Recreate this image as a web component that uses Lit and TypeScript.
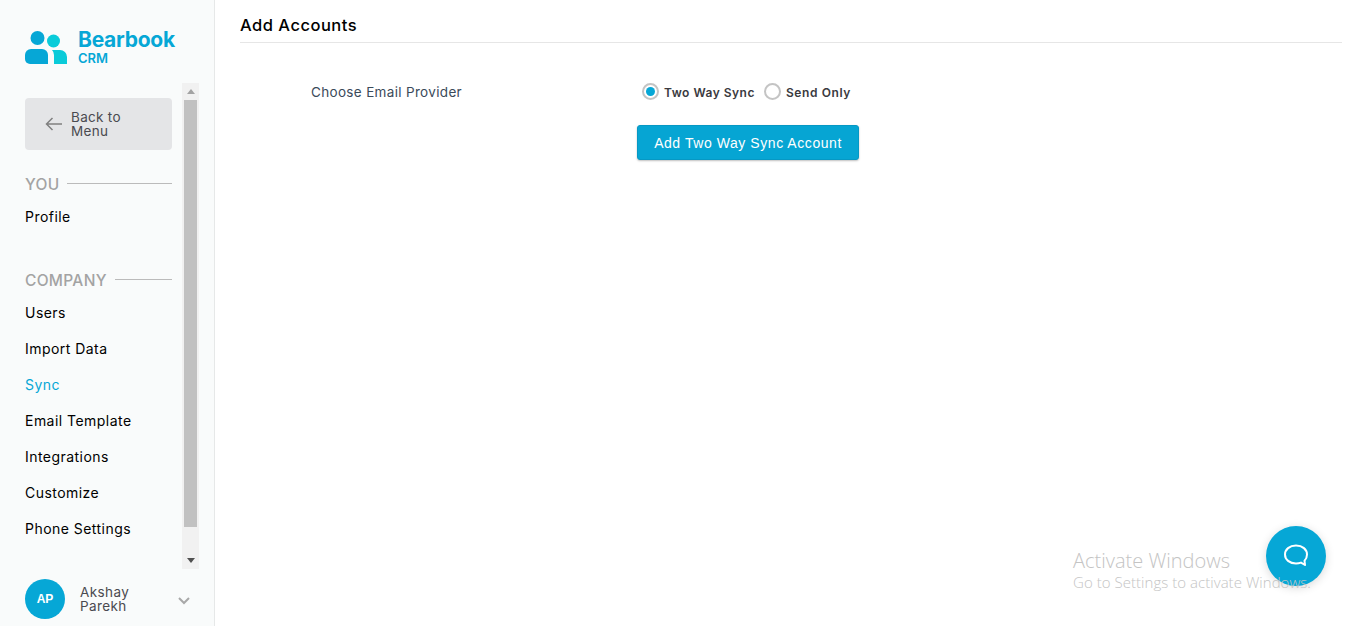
import { LitElement, html, css } from "lit";
import { customElement } from "lit/decorators.js";

@customElement("app-root")
export class AppRoot extends LitElement {
  static styles = css`
    :host { display: block; height: 626px; width: 1365px; overflow: hidden; position: relative; background: #fff; font-family: Inter, "Noto Sans", sans-serif; color: #000; }
    .page { display: flex; height: 626px; }
    .side { width: 214px; flex: none; background: #f9fbfb; border-right: 1px solid #e6e8e8; display: flex; flex-direction: column; box-sizing: content-box; }
    .logo { height: 83px; flex: none; padding: 29px 0 0 25px; box-sizing: border-box; display: flex; gap: 11px; }
    .logo svg { margin-top: 2px; }
    .brand { color: #06a7d6; font-weight: 700; font-size: 21px; line-height: 22px; letter-spacing: -0.25px; }
    .crm { color: #06a7d6; font-weight: 600; font-size: 13px; line-height: 15px; }
    .mid { height: 486px; flex: none; display: flex; padding-left: 25px; overflow: hidden; }
    .nav { width: 147px; flex: none; padding-top: 15px; }
    .back { height: 52px; background: #e4e5e7; border-radius: 4px; display: flex; align-items: center; padding-left: 20px; gap: 9px; color: #4a4a50; font-size: 13.5px; line-height: 14px; letter-spacing: 0.3px; box-sizing: border-box; }
    .head { display: flex; align-items: center; gap: 8px; color: #a3a3a3; font-size: 15.5px; font-weight: 500; line-height: 20px; letter-spacing: 0.3px; }
    .head::after { content: ""; flex: 1; height: 1px; background: #bbb; margin-top: -4px; }
    .you { margin-top: 25px; }
    .company { margin-top: 37px; }
    .item { height: 36px; display: flex; align-items: center; font-size: 14px; letter-spacing: 0.46px; color: #000; white-space: nowrap; }
    .items { margin-top: 3px; }
    .active { color: #06a7d6; }
    .sb { width: 17px; margin-left: 10px; flex: none; background: #f1f1f1; display: flex; flex-direction: column; align-items: center; box-sizing: border-box; }
    .sb .up, .sb .down { height: 17px; display: flex; align-items: center; justify-content: center; flex: none; }
    .thumb { width: 13px; height: 427px; background: #c1c1c1; flex: none; }
    .spacer { flex: 1; }
    .user { flex: 1; display: flex; align-items: flex-start; padding: 10px 0 0 25px; }
    .avatar { width: 40px; height: 40px; border-radius: 50%; background: #06a7d6; color: #fff; font: 700 12px/40px "Liberation Sans", Arial, sans-serif; text-align: center; flex: none; }
    .name { margin-left: 15px; width: 98px; color: #4a4a50; font-size: 13.5px; line-height: 14px; letter-spacing: 0.4px; padding-top: 6px; }
    .chev { margin-top: 18px; }
    .main { flex: 1; padding: 0 23px 0 25px; min-width: 0; }
    .title { height: 43px; box-sizing: border-box; border-bottom: 1px solid #e6e6e6; font-size: 16.5px; font-weight: 500; letter-spacing: 0.5px; color: #000; line-height: 51px; overflow: hidden; }
    .row { display: flex; margin-top: 38px; height: 22px; align-items: center; }
    .lbl { width: 331px; padding-left: 71px; box-sizing: content-box; font-size: 13.5px; letter-spacing: 0.33px; color: #3b4a5a; flex: none; line-height: 20px; padding-bottom: 1px; }
    .radio { display: flex; align-items: center; font-size: 12px; font-weight: 600; letter-spacing: 0.5px; color: #3a3a40; }
    .dot { width: 17px; height: 17px; border-radius: 50%; border: 2px solid #c4c4c4; box-sizing: border-box; background: #fff; display: flex; align-items: center; justify-content: center; margin: -2px 5px 0 0; }
    .dot i { width: 9px; height: 9px; border-radius: 50%; background: #06a7d6; display: block; }
    .radio + .radio { margin-left: 9px; letter-spacing: 0.6px; }
    .btnrow { padding-left: 397px; margin-top: 22px; }
    .btn { width: 222px; height: 35px; border: 1px solid #0698c4; background: #06a5d3; color: #fff; border-radius: 3px; font: 400 14px "Liberation Sans", Arial, sans-serif; letter-spacing: 0.56px; box-shadow: 0 1px 2px rgba(0,0,0,.25); padding: 0; }
    .chat { position: absolute; left: 1266px; top: 526px; width: 60px; height: 60px; border-radius: 50%; background: #06a7d6; box-shadow: 0 2px 10px rgba(0,0,0,.15); display: flex; align-items: center; justify-content: center; }
    .win { position: absolute; left: 1073px; top: 549px; color: #c4c4c4; font-family: "Open Sans", sans-serif; font-weight: 300; pointer-events: none; white-space: nowrap; }
    .win .a { font-size: 20px; line-height: 24px; }
    .win .b { font-size: 15px; line-height: 18px; letter-spacing: 0.04px; }
  `;

  render() {
    return html`
      <div class="page">
        <aside class="side">
          <div class="logo">
            <svg width="42" height="34" viewBox="0 0 42 34">
              <circle cx="12.500" cy="7" r="7" fill="#06a7d6"/>
              <circle cx="28.500" cy="10" r="6.500" fill="#0acbd9"/>
              <path d="M6 18h11a6 6 0 0 1 6 6v9H5a5 5 0 0 1-5-5v-4a6 6 0 0 1 6-6z" fill="#06a7d6"/>
              <path d="M27 19h8a7 7 0 0 1 7 7v7H29v-9a7 7 0 0 0-2-5z" fill="#0acbd9"/>
            </svg>
            <div><div class="brand">Bearbook</div><div class="crm">CRM</div></div>
          </div>
          <div class="mid">
            <div class="nav">
              <div class="back">
                <svg width="17" height="14" viewBox="0 0 17 14" fill="none" stroke="#808080" stroke-width="1.500"><path d="M17 7H1.500M7.500 1 1.500 7l6 6"/></svg>
                <span>Back to<br>Menu</span>
              </div>
              <div class="head you">YOU</div>
              <div class="items"><div class="item">Profile</div></div>
              <div class="head company">COMPANY</div>
              <div class="items">
                <div class="item">Users</div>
                <div class="item">Import Data</div>
                <div class="item active">Sync</div>
                <div class="item">Email Template</div>
                <div class="item">Integrations</div>
                <div class="item">Customize</div>
                <div class="item">Phone Settings</div>
              </div>
            </div>
            <div class="sb">
              <div class="up"><svg width="8" height="5"><path d="M0 5 4 0l4 5z" fill="#a3a3a3"/></svg></div>
              <div class="thumb"></div>
              <div class="spacer"></div>
              <div class="down"><svg width="8" height="5"><path d="M0 0h8L4 5z" fill="#505050"/></svg></div>
            </div>
          </div>
          <div class="user">
            <div class="avatar">AP</div>
            <div class="name">Akshay<br>Parekh</div>
            <svg class="chev" width="12" height="8" viewBox="0 0 12 8" fill="none" stroke="#a8a8a8" stroke-width="2"><path d="m1 1 5 5 5-5"/></svg>
          </div>
        </aside>
        <main class="main">
          <div class="title">Add Accounts</div>
          <div class="row">
            <div class="lbl">Choose Email Provider</div>
            <label class="radio"><span class="dot"><i></i></span>Two Way Sync</label>
            <label class="radio"><span class="dot"></span>Send Only</label>
          </div>
          <div class="btnrow"><button class="btn">Add Two Way Sync Account</button></div>
        </main>
      </div>
      <div class="chat">
        <svg width="26" height="24" viewBox="0 0 26 24" fill="none" stroke="#fff" stroke-width="2"><path d="M13 1.500C6.500 1.500 2 5.500 2 10.500s4.500 9 11 9c1.800 0 3.500-.3 5-.9l4 2.400-.5-4.300c1.600-1.600 2.500-3.800 2.500-6.200 0-5-4.500-9-11-9z" stroke-linejoin="round"/></svg>
      </div>
      <div class="win"><div class="a">Activate Windows</div><div class="b">Go to Settings to activate Windows.</div></div>
    `;
  }
}
